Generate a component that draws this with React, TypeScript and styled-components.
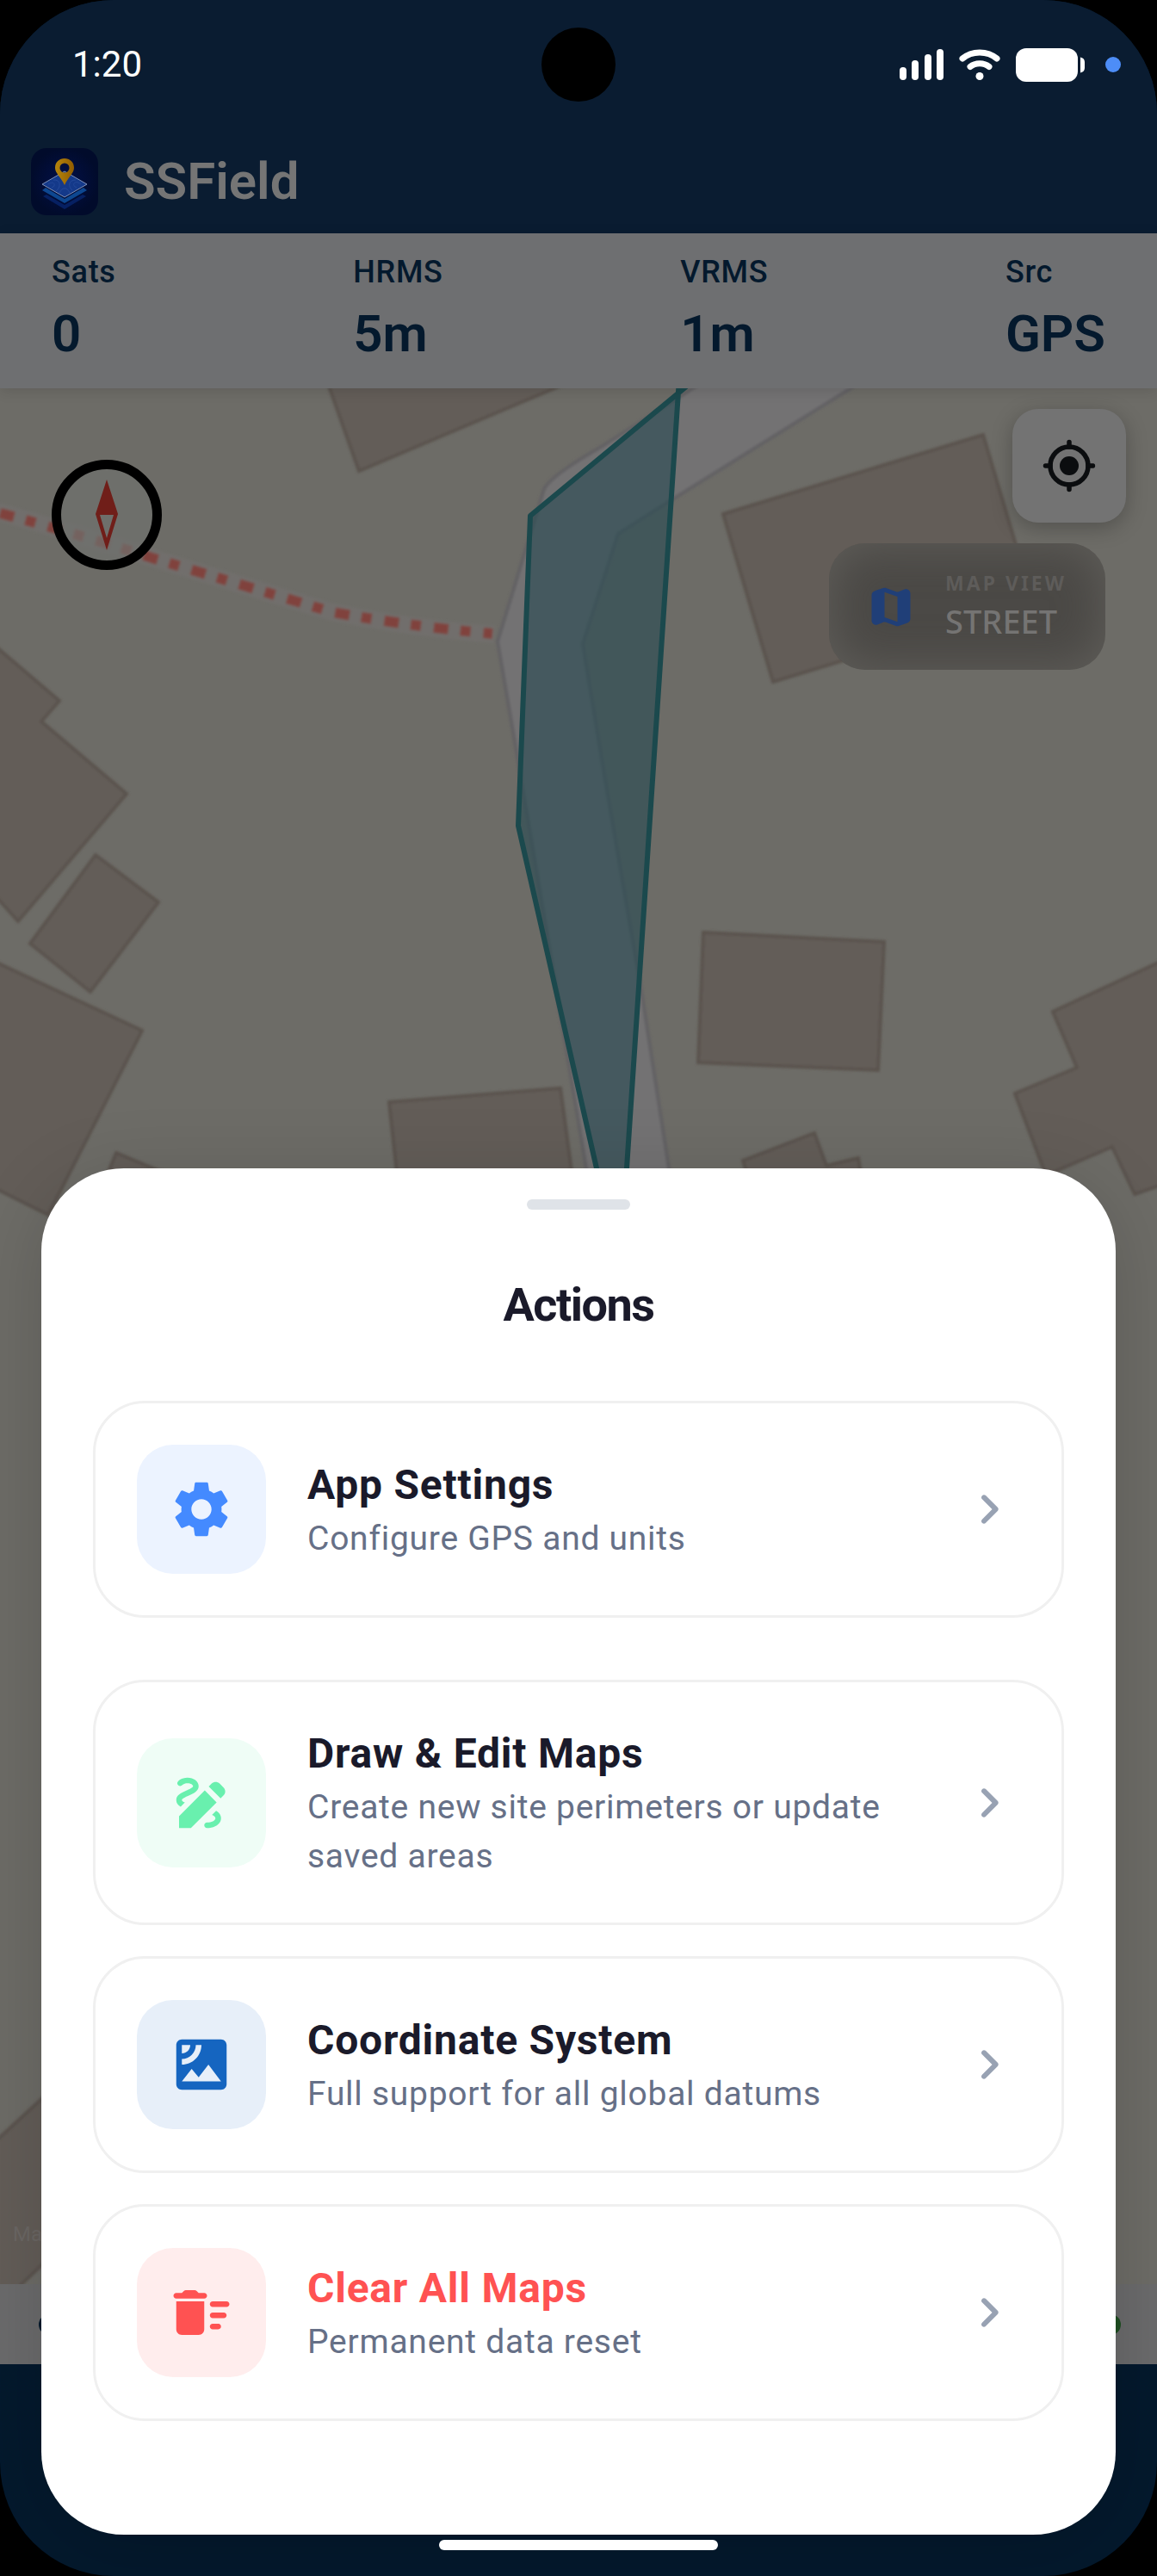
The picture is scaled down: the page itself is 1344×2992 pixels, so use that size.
import React from "react";
import styled, { createGlobalStyle } from "styled-components";
import { MdDraw, MdSatellite, MdSettings } from "react-icons/md";

const GlobalStyle = createGlobalStyle`
  *, *::before, *::after { box-sizing: border-box; }
  body { margin: 0; background: #000; font-family: Roboto, "Noto Sans", sans-serif; }
  button { font: inherit; color: inherit; border: 0; padding: 0; background: none; cursor: pointer; }
  h1, h2, p, dl, dt, dd, ul { margin: 0; padding: 0; }
`;

const Screen = styled.div`
  position: relative;
  display: flex;
  flex-direction: column;
  min-height: 100vh;
  border-radius: 132px;
  overflow: hidden;
  background: #04192d;
`;

const Header = styled.header`
  background: #0a1c31;
  color: #757575;
`;

const StatusBar = styled.div`
  display: flex;
  align-items: center;
  justify-content: space-between;
  height: 150px;
  padding: 0 42px 0 84px;
  color: #fff;
  font-size: 42px;
  line-height: 48px;
`;

const StatusIcons = styled.div`
  display: flex;
  align-items: center;
  gap: 18px;
`;

const PrivacyDot = styled.span`
  width: 18px;
  height: 18px;
  margin-left: 6px;
  border-radius: 50%;
  background: #4d8df7;
`;

const Camera = styled.span`
  position: absolute;
  top: 32px;
  left: 50%;
  width: 86px;
  height: 86px;
  margin-left: -43px;
  border-radius: 50%;
  background: #000;
`;

const Brand = styled.div`
  display: flex;
  align-items: center;
  gap: 30px;
  height: 121px;
  padding: 0 36px;
`;

const BrandName = styled.h1`
  font-size: 60px;
  line-height: 72px;
  font-weight: 600;
`;

const Stats = styled.dl`
  position: relative;
  z-index: 1;
  display: flex;
  justify-content: space-between;
  padding: 24px 60px;
  background: #6e6f71;
  color: #04192d;
  box-shadow: 0 3px 15px rgba(0, 0, 0, 0.12);
`;

const StatLabel = styled.dt`
  font-size: 36px;
  line-height: 42px;
  font-weight: 500;
  letter-spacing: 0.02em;
`;

const StatValue = styled.dd`
  margin-top: 12px;
  font-size: 60px;
  line-height: 78px;
  font-weight: 600;
`;

const MapArea = styled.main`
  position: relative;
  flex: 1;
  overflow: hidden;
  background: #6d6c67;
`;

const MapCanvas = styled.svg`
  position: absolute;
  inset: 0;
  width: 100%;
  height: 100%;
`;

const CompassButton = styled.button`
  position: absolute;
  top: 83px;
  left: 60px;
  width: 128px;
  height: 128px;
  svg { display: block; }
`;

const MapControls = styled.div`
  position: absolute;
  top: 24px;
  right: 36px;
  display: flex;
  flex-direction: column;
  align-items: flex-end;
  gap: 24px;
`;

const LocateButton = styled.button`
  display: grid;
  place-items: center;
  width: 132px;
  height: 132px;
  border-radius: 30px;
  background: #737373;
  color: #0b0d0f;
  box-shadow: 0 6px 24px rgba(0, 0, 0, 0.25);
`;

const ViewButton = styled.button`
  display: flex;
  align-items: center;
  gap: 33px;
  height: 147px;
  margin-right: 24px;
  padding: 0 45px 0 42px;
  border-radius: 42px;
  background: #4b4946;
  box-shadow: inset 0 0 54px rgba(112, 110, 105, 0.6);
  font-family: "Noto Sans", sans-serif;
  text-align: left;
  svg { color: #203f78; }
`;

const ViewCaption = styled.span`
  display: block;
  color: #5e5c5a;
  font-size: 23px;
  line-height: 33px;
  font-weight: 700;
  letter-spacing: 3px;
`;

const ViewName = styled.span`
  display: block;
  color: #757473;
  font-size: 38px;
  line-height: 54px;
  font-weight: 500;
`;

const Attribution = styled.small`
  position: absolute;
  left: 15px;
  bottom: 44px;
  color: #6b6764;
  font-size: 24px;
  line-height: 28px;
`;

const InfoBar = styled.div`
  display: flex;
  align-items: center;
  justify-content: space-between;
  height: 93px;
  padding: 0 42px 0 45px;
  background: #6b6b6c;
`;

const InfoDot = styled.span<{ $color: string }>`
  width: 24px;
  height: 24px;
  border-radius: 50%;
  background: ${(p) => p.$color};
`;

const NavSpace = styled.div`
  height: 246px;
`;

const Sheet = styled.section`
  position: absolute;
  z-index: 2;
  left: 48px;
  right: 48px;
  bottom: 48px;
  padding: 36px 60px 132px;
  border-radius: 96px;
  background: #fff;
  box-shadow: 0 15px 90px rgba(0, 0, 0, 0.16);
`;

const Handle = styled.div`
  width: 120px;
  height: 12px;
  margin: 0 auto;
  border-radius: 6px;
  background: #dfe3e8;
`;

const SheetTitle = styled.h2`
  padding: 72px 0;
  color: #1a1a2a;
  font-size: 54px;
  line-height: 78px;
  font-weight: 700;
  letter-spacing: -0.028em;
  text-align: center;
`;

const ActionList = styled.ul`
  display: flex;
  flex-direction: column;
  gap: 36px;
  list-style: none;
  li:first-child { margin-bottom: 36px; }
`;

const ActionCard = styled.button`
  display: flex;
  align-items: center;
  gap: 48px;
  width: 100%;
  padding: 48px;
  border: 3px solid #f0f0f0;
  border-radius: 60px;
  background: #fff;
  text-align: left;
`;

const Tile = styled.span<{ $color: string; $tint: string }>`
  display: grid;
  place-items: center;
  flex: none;
  width: 150px;
  height: 150px;
  border-radius: 42px;
  background: ${(p) => p.$tint};
  color: ${(p) => p.$color};
`;

const ActionText = styled.span`
  flex: 1;
  min-width: 0;
`;

const ActionTitle = styled.span<{ $danger?: boolean }>`
  display: block;
  color: ${(p) => (p.$danger ? "#ff5252" : "#1a1a2a")};
  font-size: 48px;
  line-height: 69px;
  font-weight: 700;
  letter-spacing: 0.016em;
`;

const ActionNote = styled.span`
  display: block;
  color: #667087;
  font-size: 39px;
  line-height: 57px;
  letter-spacing: 0.019em;
`;

const Chevron = styled.svg`
  flex: none;
  fill: #98a2b3;
`;

const HomeIndicator = styled.div`
  position: absolute;
  z-index: 3;
  left: 50%;
  bottom: 30px;
  width: 324px;
  height: 12px;
  margin-left: -162px;
  border-radius: 6px;
  background: #fff;
`;

function Signal() {
  return (
    <svg width="51" height="36" viewBox="0 0 51 36" fill="#fff" aria-label="Signal">
      <rect x="0" y="21" width="8" height="15" rx="4" />
      <rect x="14" y="13" width="8" height="23" rx="4" />
      <rect x="29" y="6" width="8" height="30" rx="4" />
      <rect x="43" y="0" width="8" height="36" rx="4" />
    </svg>
  );
}

function Wifi() {
  return (
    <svg width="48" height="36" viewBox="0 0 48 36" aria-label="Wi-Fi">
      <g fill="none" stroke="#fff" strokeWidth="7" strokeLinecap="round">
        <path d="M4 11 C15 1.500 33 1.500 44 11" />
        <path d="M13 20.500 C19 15.500 29 15.500 35 20.500" />
      </g>
      <circle cx="24" cy="31.500" r="4.500" fill="#fff" />
    </svg>
  );
}

function Battery() {
  return (
    <svg width="80" height="39" viewBox="0 0 80 39" fill="#fff" aria-label="Battery">
      <rect width="72" height="39" rx="12" />
      <path d="M75 10.500 C78 11 80 13 80 16 V23 C80 26 78 28 75 28.500 Z" />
    </svg>
  );
}

function Logo() {
  return (
    <svg width="78" height="78" viewBox="0 0 78 78" aria-hidden="true">
      <defs>
        <radialGradient id="logoBack">
          <stop offset="0" stopColor="#02104a" />
          <stop offset="1" stopColor="#010b2b" />
        </radialGradient>
        <linearGradient id="logoPin" x1="0" x2="1">
          <stop offset="0" stopColor="#b5850c" />
          <stop offset="1" stopColor="#915c00" />
        </linearGradient>
      </defs>
      <rect width="78" height="78" rx="18" fill="url(#logoBack)" />
      <path d="M14 56 L39 71 L64 56 L60 54 L39 66 L18 54 Z" fill="#062062" />
      <path d="M13 49 L39 64 L65 49 L61 46 L39 59 L17 46 Z" fill="#0d4790" />
      <path d="M13 42 L39 27 L65 42 L39 57 Z" fill="#14398a" stroke="#8092b8" strokeWidth="1" />
      <g fill="none" stroke="#24499a" strokeWidth="1">
        <path d="M20 42 C27 37 30 44 24 46 M26 37 C35 36 35 46 29 50 M58 42 C51 36 46 43 53 46 M52 37 C43 37 43 45 48 49 M33 52 C36 45 42 45 45 52" />
      </g>
      <path fillRule="evenodd" d="M39 43 C35 34 28 29 28 23 C28 16 33 12 39 12 C45 12 50 16 50 23 C50 29 43 34 39 43 Z M39 17.500 A5.500 5.500 0 1 0 39 28.500 A5.500 5.500 0 1 0 39 17.500 Z" fill="url(#logoPin)" />
    </svg>
  );
}

function Compass() {
  return (
    <svg width="128" height="128" viewBox="0 0 128 128" aria-hidden="true">
      <circle cx="64" cy="64" r="58.500" fill="#6f706d" fillOpacity="0.7" stroke="#000" strokeWidth="11" />
      <path fillRule="evenodd" d="M64 23 L77 63 L64 105 L51 63 Z M56 64 L64 91 L72 64 Z" fill="#701e19" />
    </svg>
  );
}

function Locate() {
  return (
    <svg width="66" height="66" viewBox="0 0 24 24" fill="none" stroke="currentColor" strokeWidth="2" strokeLinecap="round" aria-hidden="true">
      <circle cx="12" cy="12" r="8" />
      <path d="M12 2 V4 M12 20 V22 M2 12 H4 M20 12 H22" />
      <circle cx="12" cy="12" r="4" fill="currentColor" stroke="none" />
    </svg>
  );
}

function FoldedMap() {
  return (
    <svg width="60" height="60" viewBox="0 0 24 24" fill="currentColor" aria-hidden="true">
      <path d="M14.650 4.980l-5-1.750c-.42-.15-.88-.15-1.300-.01L4.360 4.560C3.550 4.840 3 5.600 3 6.460v11.850c0 1.410 1.410 2.370 2.720 1.860l2.930-1.140c.22-.09.47-.09.69-.01l5 1.750c.42.15.88.15 1.300.01l3.990-1.340c.81-.27 1.360-1.040 1.360-1.900V5.690c0-1.410-1.410-2.370-2.720-1.860l-2.930 1.140c-.22.08-.46.09-.69.01zM15 18.890l-6-2.110V5.110l6 2.110v11.670z" />
    </svg>
  );
}

function DeleteSweep() {
  return (
    <svg width="78" height="78" viewBox="0 0 24 24" fill="currentColor" aria-hidden="true">
      <path d="M16 16h2c.55 0 1 .45 1 1s-.45 1-1 1h-2c-.55 0-1-.45-1-1s.45-1 1-1zm0-8h5c.55 0 1 .45 1 1s-.45 1-1 1h-5c-.55 0-1-.45-1-1s.45-1 1-1zm0 4h4c.55 0 1 .45 1 1s-.45 1-1 1h-4c-.55 0-1-.45-1-1s.45-1 1-1zM3 18c0 1.100.9 2 2 2h6c1.100 0 2-.9 2-2V8H3v10zM13 5h-2l-.71-.71c-.18-.18-.44-.29-.7-.29H6.410c-.26 0-.52.11-.7.29L5 5H3c-.55 0-1 .45-1 1s.45 1 1 1h10c.55 0 1-.45 1-1s-.45-1-1-1z" />
    </svg>
  );
}

const buildings = [
  "379,440 417,547 670,440",
  "840,597 1142,505 1200,700 898,792",
  "-6,750 69,814 48,838 147,922 21,1070 -6,1040",
  "111,993 184,1048 105,1152 35,1096",
  "-6,1117 165,1197 56,1411 -6,1380",
  "135,1339 190,1362 190,1400 110,1400",
  "817,1083 1027,1094 1020,1243 811,1234",
  "452,1280 651,1264 668,1390 464,1390",
  "863,1348 946,1316 960,1354 997,1345 1006,1400 880,1400",
  "1350,1116 1223,1175 1251,1240 1179,1270 1215,1365 1292,1332 1318,1387 1350,1376",
  "-6,2488 60,2427 60,2620 25,2653 14,2670 -6,2670",
];

function StreetMap() {
  return (
    <MapCanvas viewBox="0 451 1344 2202" preserveAspectRatio="xMidYMin slice" aria-hidden="true">
      <defs>
        <filter id="soft" x="-5%" y="-5%" width="110%" height="110%">
          <feGaussianBlur stdDeviation="1.500" />
        </filter>
      </defs>
      <g filter="url(#soft)">
        {buildings.map((points) => (
          <polygon key={points} points={points} fill="#635d59" stroke="#5a524d" strokeWidth="4" />
        ))}
        <path
          d="M822 440 L700 518 Q640 552 632 568 L598 680 L578 745 L600 873 L681 1357 L690 1400 L785 1400 L777 1357 L746 1157 L702 900 L677 748 L718 620 L778 582 L1006 440 Z"
          fill="#737273" stroke="#626163" strokeWidth="4"
        />
        <path d="M-4 594 Q90 620 183 650 L386 711 Q480 730 574 737" fill="none" stroke="#716e6c" strokeWidth="20" />
        <path d="M0 596 Q90 620 183 650 L386 711 Q480 728 572 736" fill="none" stroke="#80433c" strokeWidth="12" strokeDasharray="17 14 12 15" />
      </g>
      <polygon points="616,597 788,457 728,1357 724,1420 704,1420 693,1357 602,959" fill="rgb(39,73,81)" fillOpacity="0.6" />
      <path d="M802 445 L616,599 L602,959 L693,1357 L704,1420 M789 440 L728,1357 L724,1420" fill="none" stroke="#1b494d" strokeWidth="6" strokeLinejoin="round" />
    </MapCanvas>
  );
}

const stats = [
  { label: "Sats", value: "0" },
  { label: "HRMS", value: "5m" },
  { label: "VRMS", value: "1m" },
  { label: "Src", value: "GPS" },
];

const actions = [
  { title: "App Settings", note: "Configure GPS and units", icon: <MdSettings size={78} />, color: "#448aff", tint: "#ecf3ff" },
  { title: "Draw & Edit Maps", note: "Create new site perimeters or update saved areas", icon: <MdDraw size={78} />, color: "#69f0ae", tint: "#effdf6" },
  { title: "Coordinate System", note: "Full support for all global datums", icon: <MdSatellite size={78} />, color: "#1565c0", tint: "#e7eff9" },
  { title: "Clear All Maps", note: "Permanent data reset", icon: <DeleteSweep />, color: "#ff5252", tint: "#ffeded", danger: true },
];

export default function App() {
  return (
    <>
      <GlobalStyle />
      <Screen>
        <Header>
          <StatusBar>
            <time>1:20</time>
            <StatusIcons>
              <Signal />
              <Wifi />
              <Battery />
              <PrivacyDot />
            </StatusIcons>
          </StatusBar>
          <Camera />
          <Brand>
            <Logo />
            <BrandName>SSField</BrandName>
          </Brand>
        </Header>
        <Stats>
          {stats.map((s) => (
            <div key={s.label}>
              <StatLabel>{s.label}</StatLabel>
              <StatValue>{s.value}</StatValue>
            </div>
          ))}
        </Stats>
        <MapArea>
          <StreetMap />
          <CompassButton aria-label="Compass">
            <Compass />
          </CompassButton>
          <MapControls>
            <LocateButton aria-label="My location">
              <Locate />
            </LocateButton>
            <ViewButton>
              <FoldedMap />
              <span>
                <ViewCaption>MAP VIEW</ViewCaption>
                <ViewName>STREET</ViewName>
              </span>
            </ViewButton>
          </MapControls>
          <Attribution>Ma</Attribution>
        </MapArea>
        <InfoBar>
          <InfoDot $color="#04192d" />
          <InfoDot $color="#1f4f22" />
        </InfoBar>
        <NavSpace />
        <Sheet aria-labelledby="actions-title">
          <Handle />
          <SheetTitle id="actions-title">Actions</SheetTitle>
          <ActionList>
            {actions.map((a) => (
              <li key={a.title}>
                <ActionCard>
                  <Tile $color={a.color} $tint={a.tint}>{a.icon}</Tile>
                  <ActionText>
                    <ActionTitle $danger={a.danger}>{a.title}</ActionTitle>
                    <ActionNote>{a.note}</ActionNote>
                  </ActionText>
                  <Chevron width="72" height="72" viewBox="0 0 24 24" aria-hidden="true">
                    <path d="M9.290 6.710c-.39.39-.39 1.020 0 1.410L13.170 12l-3.880 3.880c-.39.39-.39 1.020 0 1.410.39.39 1.020.39 1.410 0l4.590-4.590c.39-.39.39-1.020 0-1.410L10.700 6.700c-.38-.38-1.020-.38-1.410.01z" />
                  </Chevron>
                </ActionCard>
              </li>
            ))}
          </ActionList>
        </Sheet>
        <HomeIndicator />
      </Screen>
    </>
  );
}
